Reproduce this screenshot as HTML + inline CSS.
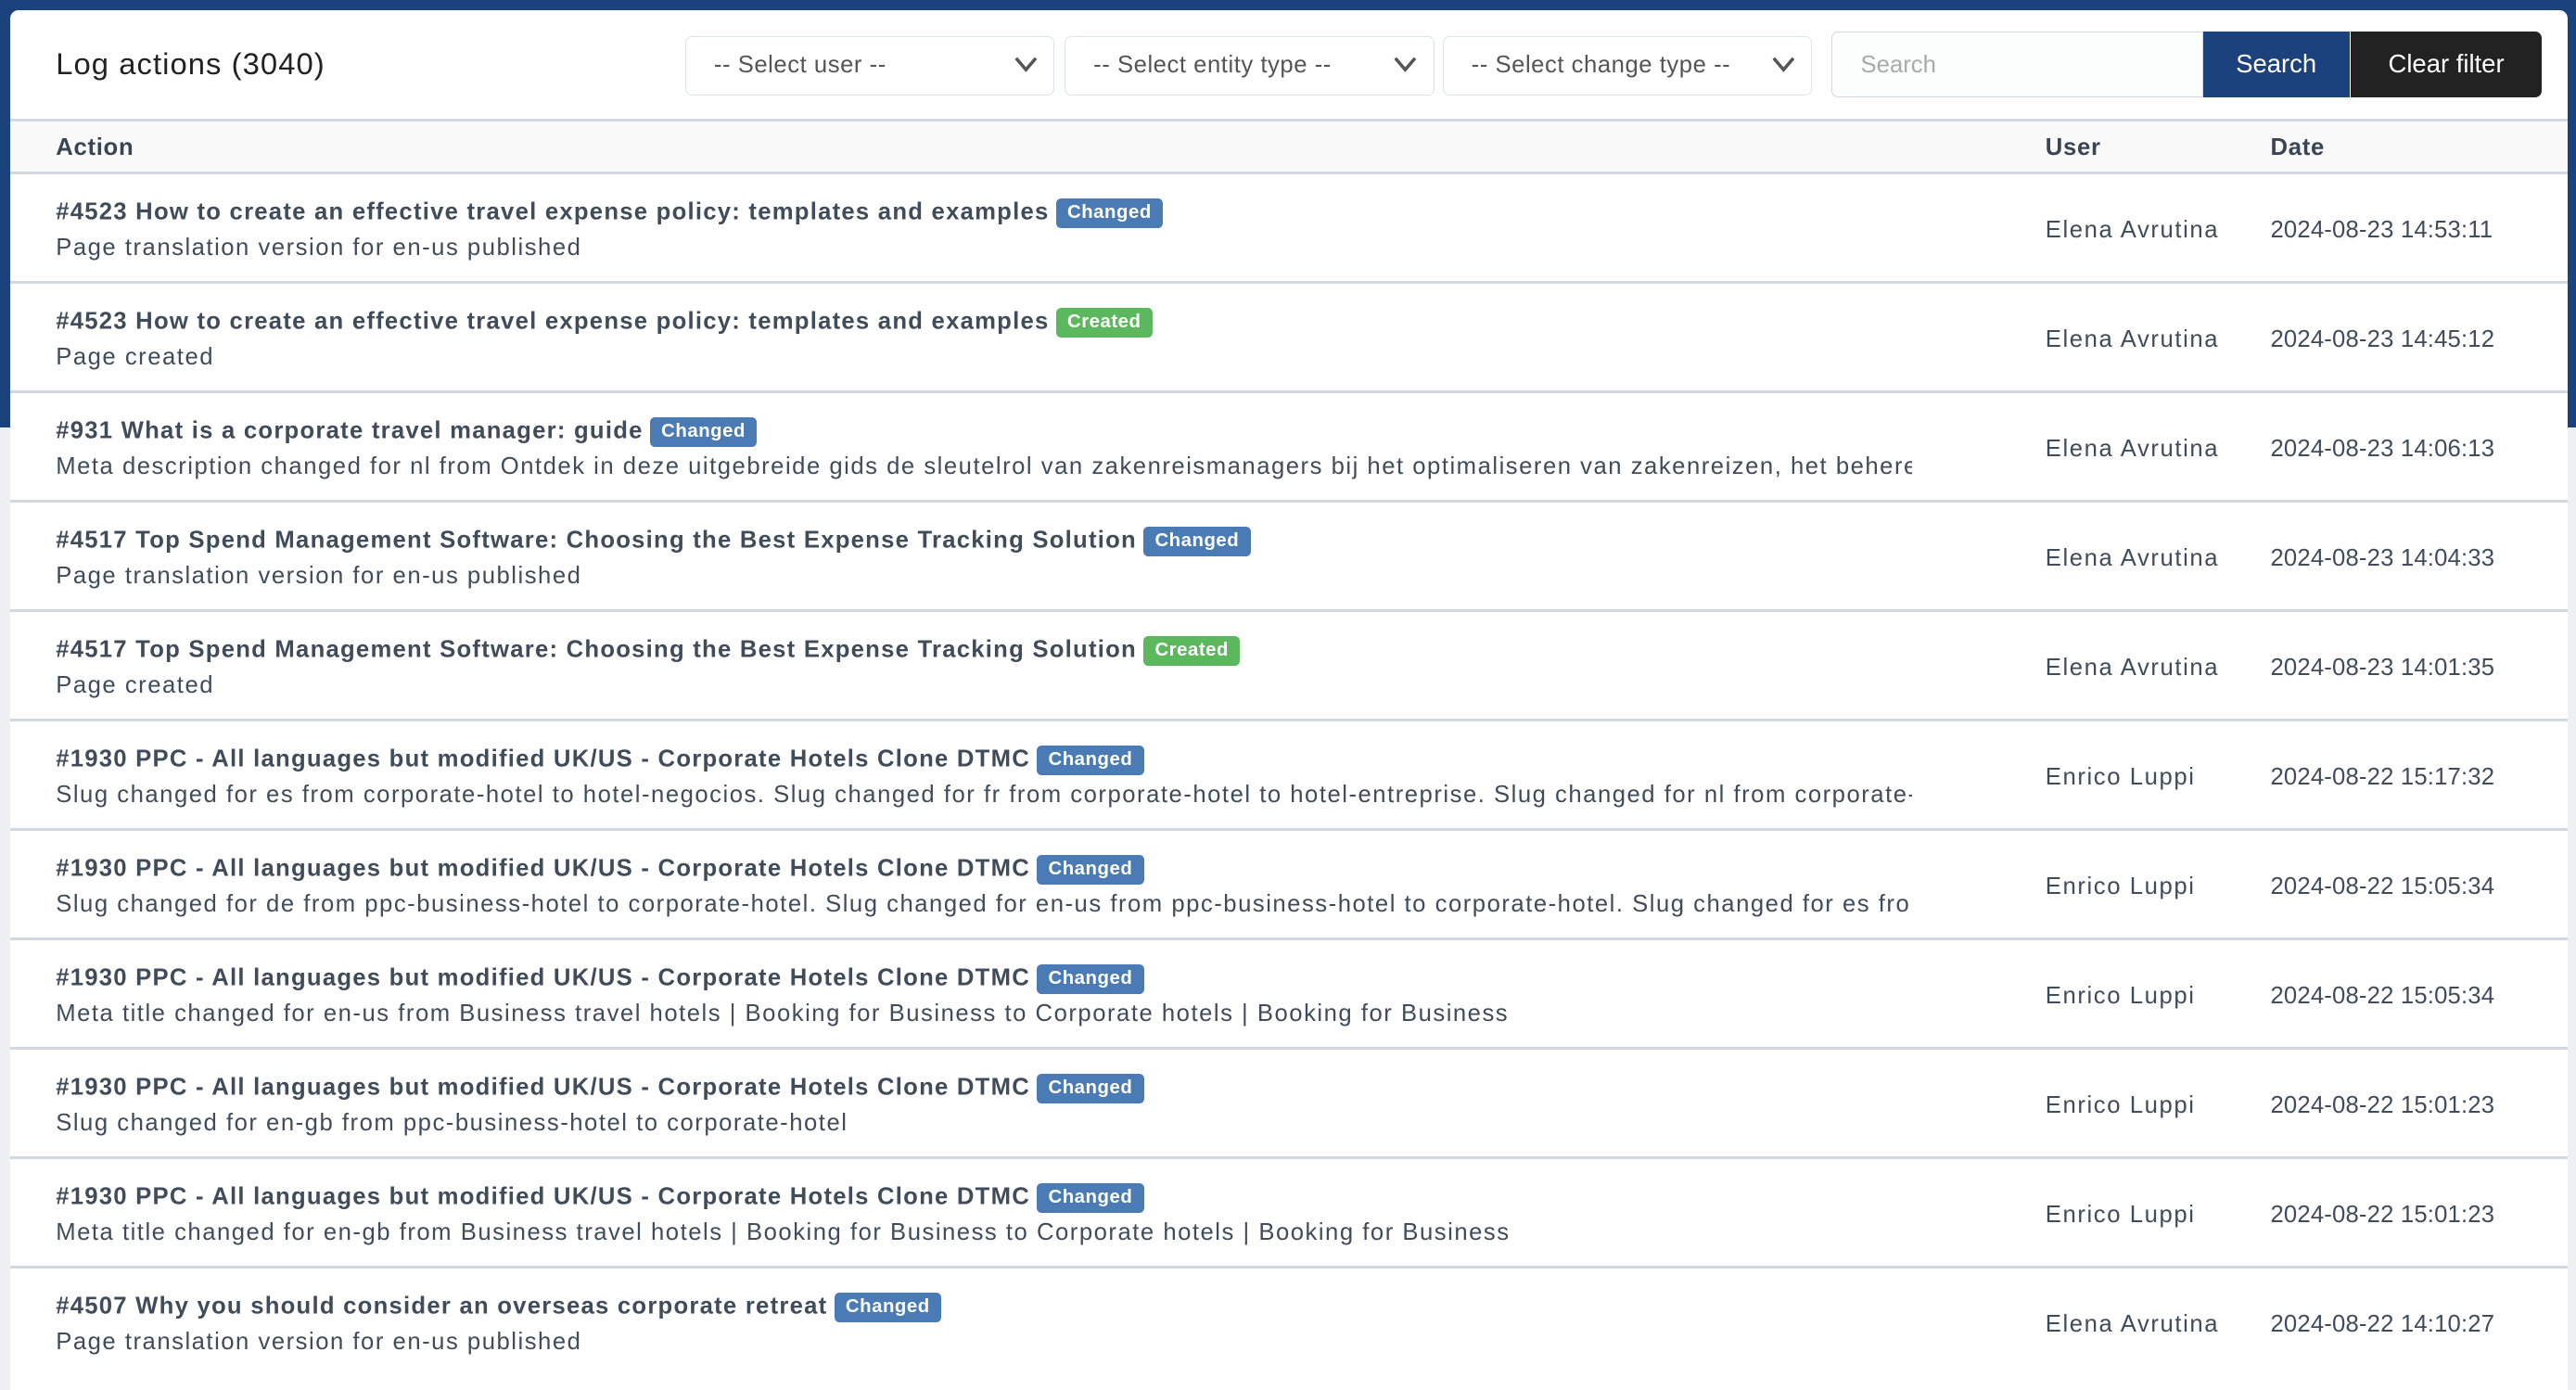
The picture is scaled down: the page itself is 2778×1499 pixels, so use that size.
<!DOCTYPE html>
<html><head><meta charset="utf-8">
<style>
html,body{margin:0;padding:0;}
body{width:2778px;height:1486px;overflow:hidden;background:#eef0f4;font-family:"Liberation Sans",sans-serif;}
#z{zoom:1.7717;width:1568px;height:839px;position:relative;}
.band{position:absolute;left:0;top:0;width:1568px;height:260px;background:#1c427e;}
.card{position:absolute;left:6px;top:6px;width:1557px;height:840px;background:#fff;border-radius:5px 5px 0 0;}
.title{position:absolute;left:28px;top:22px;font-size:18.5px;color:#222;letter-spacing:0.6px;}
.sel{position:absolute;top:16px;height:36px;border:1px solid #dde3ec;border-radius:4px;background:#fff;box-sizing:border-box;font-size:14.5px;color:#555;line-height:34px;padding-left:17px;letter-spacing:0.3px;}
.sel svg{position:absolute;right:10px;top:12px;}
.inp{position:absolute;left:1109px;top:13px;width:226px;height:40px;border:1px solid #d0d8e2;border-radius:4px 0 0 4px;box-sizing:border-box;background:#fcfdfd;color:#aaa;font-size:14.5px;line-height:40px;padding-left:17px;}
.btn{position:absolute;top:13px;height:40px;line-height:40px;color:#fff;font-size:15.5px;text-align:center;}
.thead{position:absolute;left:0;top:66px;width:1557px;height:34px;background:#f9f9f9;border-top:2px solid #d0d8e2;border-bottom:2px solid #d0d8e2;box-sizing:border-box;font-weight:bold;font-size:14.5px;color:#3a4554;letter-spacing:0.4px;}
.thead span{position:absolute;top:8px;}
.row{position:absolute;left:0;width:1557px;height:66.6px;border-bottom:2px solid #d0d8e2;box-sizing:border-box;color:#414c5a;}
.t{position:absolute;left:28px;top:15px;font-weight:bold;font-size:14.5px;white-space:nowrap;letter-spacing:0.7px;}
.s{position:absolute;left:28px;top:37px;font-size:14.5px;white-space:nowrap;width:1130px;overflow:hidden;letter-spacing:0.85px;}
.u{position:absolute;left:1239px;top:26px;font-size:14.5px;letter-spacing:0.9px;}
.d{position:absolute;left:1376px;top:26px;font-size:14.5px;letter-spacing:0.1px;}
.b{display:inline-block;font-size:11.5px;font-weight:bold;color:#fff;background:#4a7bb5;border-radius:3px;padding:2px 7px 3px;margin-left:4px;vertical-align:1px;letter-spacing:0.3px;}
.g{background:#5cb85c;}
</style></head><body><div id="z">
<div class="band"></div>
<div class="card">
<div class="title">Log actions (3040)</div>
<div class="sel" style="left:411px;width:225px">-- Select user --<svg width="14" height="10" viewBox="0 0 14 10"><path d="M1 1 L7 8 L13 1" stroke="#555" stroke-width="2" fill="none"/></svg></div>
<div class="sel" style="left:642px;width:225px">-- Select entity type --<svg width="14" height="10" viewBox="0 0 14 10"><path d="M1 1 L7 8 L13 1" stroke="#555" stroke-width="2" fill="none"/></svg></div>
<div class="sel" style="left:872px;width:225px">-- Select change type --<svg width="14" height="10" viewBox="0 0 14 10"><path d="M1 1 L7 8 L13 1" stroke="#555" stroke-width="2" fill="none"/></svg></div>
<div class="inp">Search</div>
<div class="btn" style="left:1335px;width:89px;background:#1c427e;border-radius:0">Search</div>
<div class="btn" style="left:1425px;width:116px;background:#222;border-radius:0 4px 4px 0">Clear filter</div>
<div class="thead"><span style="left:28px">Action</span><span style="left:1239px">User</span><span style="left:1376px">Date</span></div>

<div class="row" style="top:100px"><div class="t">#4523 How to create an effective travel expense policy: templates and examples<span class="b">Changed</span></div><div class="s">Page translation version for en-us published</div><div class="u">Elena Avrutina</div><div class="d">2024-08-23 14:53:11</div></div>
<div class="row" style="top:166.6px"><div class="t">#4523 How to create an effective travel expense policy: templates and examples<span class="b g">Created</span></div><div class="s">Page created</div><div class="u">Elena Avrutina</div><div class="d">2024-08-23 14:45:12</div></div>
<div class="row" style="top:233.2px"><div class="t">#931 What is a corporate travel manager: guide<span class="b">Changed</span></div><div class="s">Meta description changed for nl from Ontdek in deze uitgebreide gids de sleutelrol van zakenreismanagers bij het optimaliseren van zakenreizen, het beheren</div><div class="u">Elena Avrutina</div><div class="d">2024-08-23 14:06:13</div></div>
<div class="row" style="top:299.8px"><div class="t">#4517 Top Spend Management Software: Choosing the Best Expense Tracking Solution<span class="b">Changed</span></div><div class="s">Page translation version for en-us published</div><div class="u">Elena Avrutina</div><div class="d">2024-08-23 14:04:33</div></div>
<div class="row" style="top:366.4px"><div class="t">#4517 Top Spend Management Software: Choosing the Best Expense Tracking Solution<span class="b g">Created</span></div><div class="s">Page created</div><div class="u">Elena Avrutina</div><div class="d">2024-08-23 14:01:35</div></div>
<div class="row" style="top:433px"><div class="t">#1930 PPC - All languages but modified UK/US - Corporate Hotels Clone DTMC<span class="b">Changed</span></div><div class="s">Slug changed for es from corporate-hotel to hotel-negocios. Slug changed for fr from corporate-hotel to hotel-entreprise. Slug changed for nl from corporate-hotel</div><div class="u">Enrico Luppi</div><div class="d">2024-08-22 15:17:32</div></div>
<div class="row" style="top:499.6px"><div class="t">#1930 PPC - All languages but modified UK/US - Corporate Hotels Clone DTMC<span class="b">Changed</span></div><div class="s">Slug changed for de from ppc-business-hotel to corporate-hotel. Slug changed for en-us from ppc-business-hotel to corporate-hotel. Slug changed for es from</div><div class="u">Enrico Luppi</div><div class="d">2024-08-22 15:05:34</div></div>
<div class="row" style="top:566.2px"><div class="t">#1930 PPC - All languages but modified UK/US - Corporate Hotels Clone DTMC<span class="b">Changed</span></div><div class="s">Meta title changed for en-us from Business travel hotels | Booking for Business to Corporate hotels | Booking for Business</div><div class="u">Enrico Luppi</div><div class="d">2024-08-22 15:05:34</div></div>
<div class="row" style="top:632.8px"><div class="t">#1930 PPC - All languages but modified UK/US - Corporate Hotels Clone DTMC<span class="b">Changed</span></div><div class="s">Slug changed for en-gb from ppc-business-hotel to corporate-hotel</div><div class="u">Enrico Luppi</div><div class="d">2024-08-22 15:01:23</div></div>
<div class="row" style="top:699.4px"><div class="t">#1930 PPC - All languages but modified UK/US - Corporate Hotels Clone DTMC<span class="b">Changed</span></div><div class="s">Meta title changed for en-gb from Business travel hotels | Booking for Business to Corporate hotels | Booking for Business</div><div class="u">Enrico Luppi</div><div class="d">2024-08-22 15:01:23</div></div>
<div class="row" style="top:766px;border-bottom:none"><div class="t">#4507 Why you should consider an overseas corporate retreat<span class="b">Changed</span></div><div class="s">Page translation version for en-us published</div><div class="u">Elena Avrutina</div><div class="d">2024-08-22 14:10:27</div></div>
</div>
</div></body></html>
